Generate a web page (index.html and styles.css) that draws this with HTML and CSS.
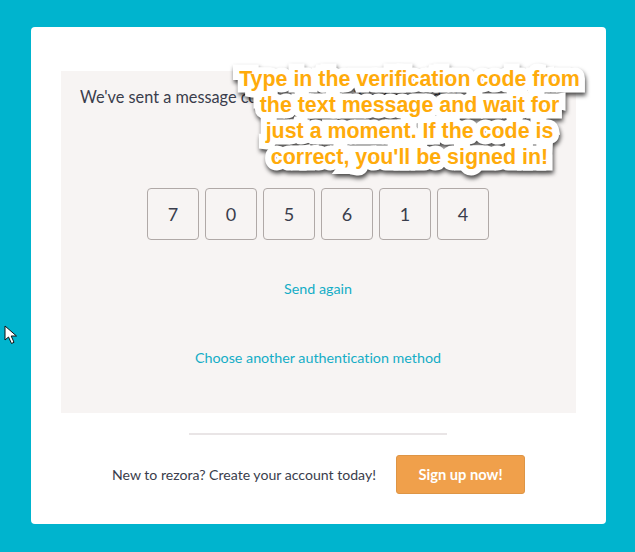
FILE: index.html
```html
<!DOCTYPE html>
<html lang="en">
<head>
    <meta charset="UTF-8">
    <title>Verification code</title>
    <link rel="stylesheet" href="styles.css">
</head>
<body>
    <svg class="cursor" width="14" height="20" viewBox="0 0 14 20">
        <path d="M1 1 L1 15 L4.5 12 L7.5 18.5 L10 17.3 L7.2 11 L12.5 11 Z" fill="#fff" stroke="#111" stroke-width="1"/>
    </svg>
    <div class="card">
        <div class="panel">
            <p class="message">We've sent a message containing a verification code to your phone.</p>
            <div class="code-row">
                <div class="digit">7</div>
                <div class="digit">0</div>
                <div class="digit">5</div>
                <div class="digit">6</div>
                <div class="digit">1</div>
                <div class="digit">4</div>
            </div>
            <a class="link send-again">Send again</a>
            <a class="link other-method">Choose another authentication method</a>
        </div>
        <div class="divider"></div>
        <div class="signup">
            <span class="signup-text">New to rezora? Create your account today!</span>
            <button class="signup-button">Sign up now!</button>
        </div>
        <div class="callout" data-text="Type in the verification code from the text message and wait for just a moment. If the code is correct, you'll be signed in!">
            <span class="callout-text">Type in the verification code from the text message and wait for just a moment. If the code is correct, you'll be signed in!</span>
        </div>
    </div>
</body>
</html>
```

FILE: styles.css
```css
html, body {
    height: 100%;
}

body {
    margin: 0;
    padding: 27px 29px 28px 31px;
    box-sizing: border-box;
    background-color: #00B4CE;
    font-family: 'Lato', sans-serif;
    font-variant-ligatures: none;
    color: #3a3d4c;
    overflow: hidden;
}

.cursor {
    position: absolute;
    left: 4px;
    top: 325px;
}

.card {
    position: relative;
    height: 497px;
    box-sizing: border-box;
    padding: 44px 30px 0;
    background-color: #fff;
    border-radius: 4px;
}

.panel {
    height: 342px;
    box-sizing: border-box;
    padding: 16px 20px 0 19px;
    background-color: #F7F4F3;
    display: flex;
    flex-direction: column;
    align-items: center;
}

.message {
    align-self: flex-start;
    margin: 0;
    font-size: 16.3px;
    line-height: 20px;
    white-space: nowrap;
}

.code-row {
    display: flex;
    gap: 6px;
    margin-top: 81px;
}

.digit {
    width: 52px;
    height: 52px;
    box-sizing: border-box;
    border: 1px solid #b0a9a7;
    border-radius: 4px;
    display: flex;
    justify-content: center;
    align-items: center;
    font-size: 18px;
}

.link {
    color: #14ADC6;
    font-size: 14.3px;
    line-height: 18px;
}

.send-again {
    margin-top: 40px;
}

.other-method {
    margin-top: 51px;
}

.divider {
    width: 258px;
    height: 2px;
    margin: 20px 0 0 128px;
    background-color: #E9E5E6;
}

.signup {
    display: flex;
    justify-content: center;
    align-items: center;
    gap: 20px;
    margin-top: 20px;
}

.signup-text {
    font-size: 14.1px;
}

.signup-button {
    width: 129px;
    height: 39px;
    padding: 0 0 2px;
    background-color: #F0A04B;
    border: 1px solid #DE9545;
    border-radius: 3px;
    color: #fff;
    font-family: 'Lato', sans-serif;
    font-size: 14.7px;
    font-weight: bold;
}

.callout {
    position: absolute;
    left: 208px;
    top: 39px;
    width: 341px;
    text-align: center;
    font-family: 'Liberation Sans', sans-serif;
    font-size: 21.4px;
    line-height: 26px;
    font-weight: bold;
    color: #FFAB0B;
}

/* white outline sits on its own layer so it can't cover the line above */
.callout::before {
    content: attr(data-text);
    position: absolute;
    left: 0;
    top: 0;
    width: 100%;
    color: #fff;
    -webkit-text-stroke: 13px #fff;
    filter: drop-shadow(1px 3px 2px rgba(0, 0, 0, 0.7));
}

.callout-text {
    position: relative;
}
```
